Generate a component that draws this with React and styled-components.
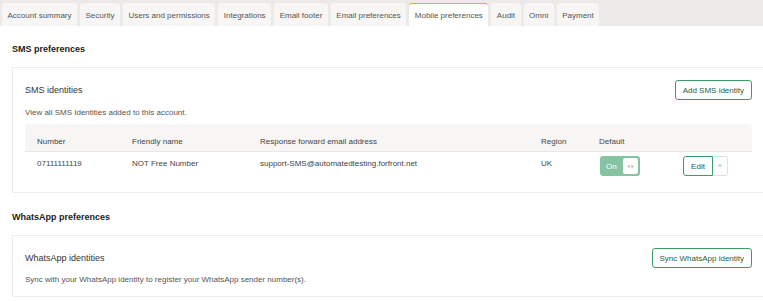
import React from "react";
import styled, { createGlobalStyle } from "styled-components";

const GlobalStyle = createGlobalStyle`
  html, body {
    margin: 0;
    padding: 0;
    background: #fff;
    overflow: hidden;
  }
  body {
    font-family: "Liberation Sans", Arial, sans-serif;
    color: #333;
  }
`;

const TabBar = styled.div`
  display: flex;
  align-items: flex-end;
  gap: 3px;
  height: 26px;
  padding: 0 2px;
  background: #ebeae8;
  box-sizing: border-box;
`;

const Tab = styled.div`
  height: 23px;
  box-sizing: border-box;
  display: flex;
  align-items: center;
  padding: 0 5.5px;
  font-size: 8px;
  color: #555;
  background: ${(p) => (p.$active ? "#fff" : "#f7f6f4")};
  border-radius: 3px 3px 0 0;
  border-top: 1.5px solid ${(p) => (p.$active ? "#f0a830" : "transparent")};
  white-space: nowrap;
`;

const Main = styled.div`
  width: 777px;
  padding: 0 12px;
  box-sizing: border-box;
`;

const SectionTitle = styled.h2`
  margin: 0;
  padding: ${(p) => p.$pt}px 0 12px;
  line-height: 11px;
  font-size: 9px;
  font-weight: bold;
  color: #222;
`;

const Card = styled.div`
  border: 1px solid #ececec;
  padding: 12px 12px ${(p) => p.$pb}px;
`;

const CardHead = styled.div`
  display: flex;
  align-items: center;
  justify-content: space-between;
  height: 20px;
`;

const CardTitle = styled.div`
  font-size: 9px;
  color: #333;
`;

const Description = styled.div`
  font-size: 8px;
  line-height: 9px;
  color: #555;
  margin-top: ${(p) => p.$mt}px;
`;

const OutlineButton = styled.button`
  height: 20px;
  box-sizing: border-box;
  padding: 0 7px;
  border: 1px solid #3d9a6c;
  border-radius: 3px;
  background: #fff;
  color: #24603f;
  font-family: inherit;
  font-size: 8px;
  cursor: pointer;
`;

const Table = styled.div`
  margin-top: 7px;
  font-size: 8px;
`;

const Row = styled.div`
  display: grid;
  grid-template-columns: 95px 128px 281px 58px 84px 83px;
  align-items: ${(p) => (p.$head ? "end" : "start")};
  background: ${(p) => (p.$head ? "#f7f6f4" : "transparent")};
  border-radius: ${(p) => (p.$head ? "4px 4px 0 0" : "0")};
  border-bottom: ${(p) => (p.$head ? "1px solid #e8e8e8" : "none")};
  height: ${(p) => (p.$head ? "28px" : "auto")};
  padding: ${(p) => (p.$head ? "0 0 5px" : "4px 0 0")};
  box-sizing: border-box;
`;

const Cell = styled.div`
  padding-left: 12px;
  color: #444;
  line-height: ${(p) => (p.$text ? "13px" : "normal")};
  padding-top: ${(p) => (p.$text ? "1px" : "0")};
  white-space: nowrap;
`;

const Toggle = styled.div`
  display: flex;
  align-items: center;
  justify-content: space-between;
  width: 40px;
  height: 20px;
  box-sizing: border-box;
  padding: 2px 2px 2px 6px;
  background: #86c3a2;
  border-radius: 3px;
  color: #fff;
  font-size: 8px;
  margin-left: 1px;
`;

const Knob = styled.div`
  width: 15px;
  height: 16px;
  background: #fff;
  border-radius: 2px;
  display: flex;
  align-items: center;
  justify-content: center;
`;

const SplitButton = styled.div`
  display: flex;
  height: 20px;
`;

const EditButton = styled(OutlineButton)`
  border-radius: 3px 0 0 3px;
  padding: 0 7px;
  width: 30px;
`;

const CaretButton = styled.button`
  width: 15px;
  height: 20px;
  border: 1px solid #d3e8dc;
  border-left: none;
  border-radius: 0 3px 3px 0;
  background: #fff;
  padding: 0;
  display: flex;
  align-items: center;
  justify-content: center;
`;

const tabs = [
  "Account summary",
  "Security",
  "Users and permissions",
  "Integrations",
  "Email footer",
  "Email preferences",
  "Mobile preferences",
  "Audit",
  "Omni",
  "Payment",
];

export default function App() {
  return (
    <>
      <GlobalStyle />
      <TabBar>
        {tabs.map((t) => (
          <Tab key={t} $active={t === "Mobile preferences"}>
            {t}
          </Tab>
        ))}
      </TabBar>
      <Main>
        <SectionTitle $pt={18}>SMS preferences</SectionTitle>
        <Card $pb={16}>
          <CardHead>
            <CardTitle>SMS identities</CardTitle>
            <OutlineButton>Add SMS identity</OutlineButton>
          </CardHead>
          <Description $mt={8}>View all SMS Identities added to this account.</Description>
          <Table>
            <Row $head>
              <Cell>Number</Cell>
              <Cell>Friendly name</Cell>
              <Cell>Response forward email address</Cell>
              <Cell>Region</Cell>
              <Cell>Default</Cell>
              <Cell />
            </Row>
            <Row>
              <Cell $text>07111111119</Cell>
              <Cell $text>NOT Free Number</Cell>
              <Cell $text>support-SMS@automatedtesting.forfront.net</Cell>
              <Cell $text>UK</Cell>
              <Cell>
                <Toggle>
                  On
                  <Knob>
                    <svg width="7" height="5" viewBox="0 0 7 5">
                      <path d="M0.5 2.5 L2.5 0.8 V4.2 Z M6.5 2.5 L4.5 0.8 V4.2 Z" fill="#a5a5a5" />
                    </svg>
                  </Knob>
                </Toggle>
              </Cell>
              <Cell>
                <SplitButton>
                  <EditButton>Edit</EditButton>
                  <CaretButton>
                    <svg width="6" height="4" viewBox="0 0 6 4">
                      <path d="M0.5 0.5 H5.5 L3 3.5 Z" fill="#b5d6c3" />
                    </svg>
                  </CaretButton>
                </SplitButton>
              </Cell>
            </Row>
          </Table>
        </Card>
        <SectionTitle $pt={19}>WhatsApp preferences</SectionTitle>
        <Card $pb={12}>
          <CardHead>
            <CardTitle>WhatsApp identities</CardTitle>
            <OutlineButton>Sync WhatsApp identity</OutlineButton>
          </CardHead>
          <Description $mt={7}>
            Sync with your WhatsApp identity to register your WhatsApp sender number(s).
          </Description>
        </Card>
      </Main>
    </>
  );
}
